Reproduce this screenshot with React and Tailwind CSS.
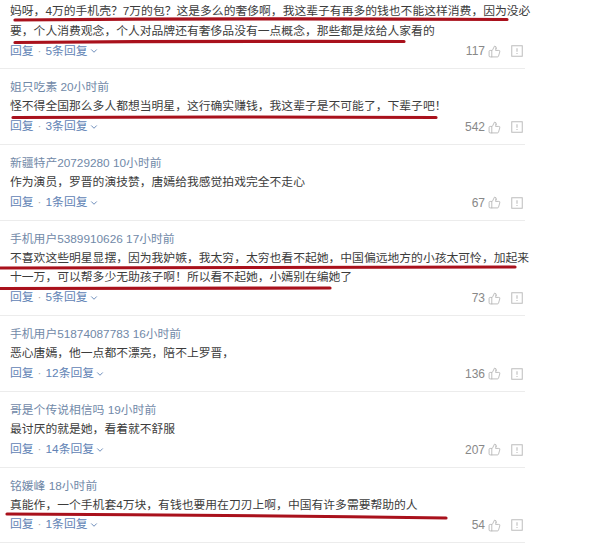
import React from "react";
import { ThumbsUp, ChevronDown } from "lucide-react";

const comments = [
  {
    user: null,
    lines: [
      "妈呀，4万的手机壳？7万的包？这是多么的奢侈啊，我这辈子有再多的钱也不能这样消费，因为没必",
      "要，个人消费观念，个人对品牌还有奢侈品没有一点概念，那些都是炫给人家看的",
    ],
    replies: 5,
    likes: 117,
  },
  {
    user: "姐只吃素",
    time: "20小时前",
    lines: ["怪不得全国那么多人都想当明星，这行确实赚钱，我这辈子是不可能了，下辈子吧！"],
    replies: 3,
    likes: 542,
  },
  {
    user: "新疆特产20729280",
    time: "10小时前",
    lines: ["作为演员，罗晋的演技赞，唐嫣给我感觉拍戏完全不走心"],
    replies: 1,
    likes: 67,
  },
  {
    user: "手机用户5389910626",
    time: "17小时前",
    lines: [
      "不喜欢这些明星显摆，因为我妒嫉，我太穷，太穷也看不起她，中国偏远地方的小孩太可怜，加起来",
      "十一万，可以帮多少无助孩子啊！所以看不起她，小嫣别在编她了",
    ],
    replies: 5,
    likes: 73,
  },
  {
    user: "手机用户51874087783",
    time: "16小时前",
    lines: ["恶心唐嫣，他一点都不漂亮，陪不上罗晋，"],
    replies: 12,
    likes: 136,
  },
  {
    user: "哥是个传说相信吗",
    time: "19小时前",
    lines: ["最讨厌的就是她，看着就不舒服"],
    replies: 14,
    likes: 207,
  },
  {
    user: "铭媛峰",
    time: "18小时前",
    lines: ["真能作，一个手机套4万块，有钱也要用在刀刃上啊，中国有许多需要帮助的人"],
    replies: 1,
    likes: 54,
  },
];

// little "report" box next to the thumb
const ReportIcon = () => (
  <svg width="12" height="12" viewBox="0 0 12 12" fill="none">
    <rect x="0.75" y="0.75" width="10.5" height="10.5" stroke="#bdbdbd" strokeWidth="1" />
    <line x1="6" y1="3.2" x2="6" y2="6.8" stroke="#bdbdbd" strokeWidth="1.1" />
    <line x1="6" y1="8" x2="6" y2="9" stroke="#bdbdbd" strokeWidth="1.1" />
  </svg>
);

const Comment = ({ c, first }) => (
  <div className={`${first ? "pt-[2px]" : "pt-[8px] border-t border-[#ececec]"} pb-[7px] pl-[10px] pr-[2px]`}>
    {c.user && (
      <div className="h-[20px] leading-[20px] text-[11.8px] text-[#7189a8] whitespace-nowrap">
        {c.user} {c.time}
      </div>
    )}
    {c.lines.map((l, i) => (
      <div
        key={i}
        className="h-[19.7px] leading-[19.7px] text-[11.8px] text-[#3c3c3c] whitespace-nowrap"
      >
        {l}
      </div>
    ))}
    <div className="h-[20px] flex items-center justify-between">
      <div className="flex items-center text-[11.8px] text-[#6183b5]">
        <span>回复</span>
        <span className="mx-[4px] text-[#aaa]">·</span>
        <span>{c.replies}条回复</span>
        <ChevronDown className="w-[10px] h-[10px] ml-[1px]" strokeWidth={2.2} />
      </div>
      <div className="flex items-center">
        <span className="text-[12px] text-[#888]">{c.likes}</span>
        <ThumbsUp className="w-[13px] h-[13px] ml-[3px] text-[#b5b5b5]" strokeWidth={1.6} />
        <span className="ml-[10px]">
          <ReportIcon />
        </span>
      </div>
    </div>
  </div>
);

export default function App() {
  return (
    <div
      className="relative w-[600px] h-[547px] overflow-hidden bg-white"
      style={{ fontFamily: '"Liberation Sans", "Noto Sans CJK SC", sans-serif' }}
    >
      <div className="w-[525px]">
        {comments.map((c, i) => (
          <Comment key={i} c={c} first={i === 0} />
        ))}
        <div className="border-t border-[#ececec]" />
      </div>

      {/* red hand-drawn underlines */}
      <svg
        className="absolute inset-0 pointer-events-none"
        width="600"
        height="547"
        viewBox="0 0 600 547"
        fill="none"
      >
        <g stroke="#a9111c" strokeWidth="3.2" strokeLinecap="round">
          <path d="M15 20 Q262 18 507 19.5" />
          <path d="M15 42.5 Q210 41 404 41.5" />
          <path d="M13 117.5 Q220 116.5 436 117.5" />
          <path d="M0 268 Q260 267 515 267" />
          <path d="M0 288.5 Q160 288 330 288" />
          <path d="M7 514 Q230 515 446 518" />
        </g>
      </svg>
    </div>
  );
}
